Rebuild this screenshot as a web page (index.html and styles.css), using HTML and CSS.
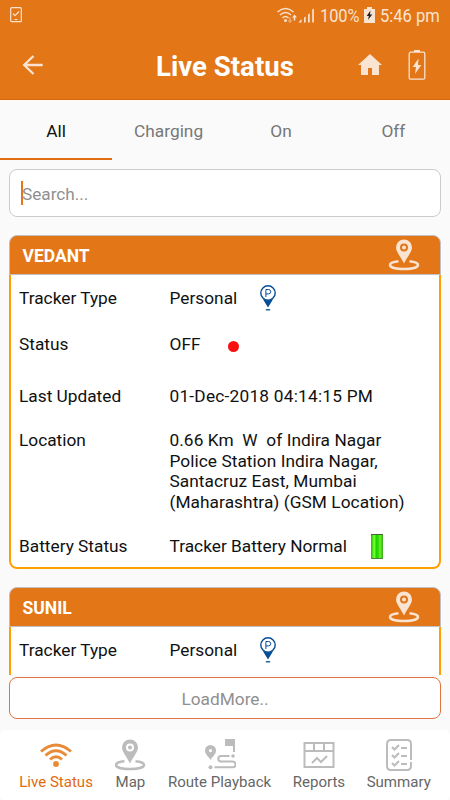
FILE: index.html
```html
<!DOCTYPE html>
<html lang="en">
<head>
<meta charset="utf-8">
<title>Live Status</title>
<link rel="stylesheet" href="styles.css">
</head>
<body>
<svg class="defs" width="0" height="0">
  <symbol id="pin" viewBox="0 0 32 32">
    <path fill-rule="evenodd" d="M16 .5A8 8 0 0 0 8 8.500C8 13 13 18 16 24.500C19 18 24 13 24 8.500A8 8 0 0 0 16 .5ZM16 4.500a4 4 0 1 1 0 8a4 4 0 0 1 0-8Z"/>
    <circle cx="16" cy="8.500" r="2"/>
    <path d="M10.500 22.300C5 22.800 2 24.300 2 26C2 28.500 8 30 16 30S30 28.500 30 26C30 24.300 27 22.800 21.500 22.300" fill="none" stroke="currentColor" stroke-width="2.500"/>
  </symbol>
  <symbol id="personal" viewBox="0 0 16 26">
    <circle cx="8" cy="8" r="7.200" fill="#fff" stroke="#064c99" stroke-width="1.400"/>
    <path d="M2.800 14Q8 16.500 13.200 14L8 22.500Z" fill="#064c99"/>
    <path d="M5.800 24.800h4.400" stroke="#064c99" stroke-width="1.300"/>
    <path d="M5.900 12V4.500h2.600a2.200 2.200 0 0 1 0 4.400H5.900" fill="none" stroke="#064c99" stroke-width="1"/>
  </symbol>
</svg>
<header class="header">
  <div class="system">
    <svg class="phone" viewBox="0 0 12 16"><rect x=".7" y=".7" width="10.600" height="14" rx="1"/><path d="M3 6.500l2 2.200L9 4.500M4.500 12.500h3"/></svg>
    <div class="system-right">
      <svg class="signals" viewBox="0 0 40 18">
        <g fill="none" stroke="#fae3d1" stroke-width="1.500"><path d="M1.500 5Q9.500-2 17.500 5M4 8Q9.500 3 15 8M6.500 11Q9.500 8 12.500 11"/></g>
        <circle cx="9.500" cy="13.500" r="1.500"/>
        <path d="M18.500 7.500l2.500 3h-1.700v3h-1.600v-3H16z"/><path opacity=".5" d="M13.200 10.500h1.600v3h1.700L14 16l-2.500-2.500h1.700z"/>
        <path d="M25.500 12v3.500h-3zM28 15.500v-5l1.700-1v6zM32 15.500v-8l1.700-1.200v9.200zM36.200 15.500V2.500l1.700-1v14z"/>
      </svg>
      <span class="percent">100%</span>
      <svg class="mini-battery" viewBox="0 0 11 16"><path d="M3 0h5v2h3v14H0V2h3z"/><path fill="#222" d="M6.500 3.500L2.700 9h2.200l-1 4L8.300 7.500H6z"/></svg>
      <span class="clock">5:46 pm</span>
    </div>
  </div>
  <div class="titlebar">
    <svg class="back" viewBox="0 0 22 20"><path d="M20.700 10H2M11.500 1L2.200 10l9.300 9"/></svg>
    <h1>Live Status</h1>
    <svg class="home" viewBox="0 0 24 22"><path d="M12 0L0 11h3v10h7v-7h4v7h7V11h3z"/></svg>
    <svg class="charge" viewBox="0 0 18 31"><rect x="1.200" y="2.200" width="15.600" height="27" rx="1.500"/><path d="M6 0h6v2H6zM10.500 8.500L4.700 17H8l-1 7 6.300-9H10z"/></svg>
  </div>
</header>
<nav class="tabs"><span class="selected">All</span><span>Charging</span><span>On</span><span>Off</span></nav>
<main class="list">
  <div class="search"><i class="caret"></i><span>Search...</span></div>
  <div class="cards">
    <section class="card">
      <div class="card-head"><h2>VEDANT</h2><svg class="locate"><use href="#pin"/></svg></div>
      <div class="card-body">
        <div class="row type"><span>Tracker Type</span><span>Personal</span><svg class="marker"><use href="#personal"/></svg></div>
        <div class="row status"><span>Status</span><span>OFF</span><i class="dot"></i></div>
        <div class="row updated"><span>Last Updated</span><span class="date">01-Dec-2018 04:14:15 PM</span></div>
        <div class="row location"><span>Location</span><span>0.66 Km&nbsp; W&nbsp; of Indira Nagar<br>Police Station Indira Nagar,<br>Santacruz East, Mumbai<br>(Maharashtra) (GSM Location)</span></div>
        <div class="row battery-row"><span>Battery Status</span><span>Tracker Battery Normal</span><i class="battery"></i></div>
      </div>
    </section>
    <section class="card">
      <div class="card-head"><h2>SUNIL</h2><svg class="locate"><use href="#pin"/></svg></div>
      <div class="card-body">
        <div class="row type"><span>Tracker Type</span><span>Personal</span><svg class="marker"><use href="#personal"/></svg></div>
      </div>
    </section>
  </div>
  <div class="more">LoadMore..</div>
</main>
<nav class="bottom">
  <div class="item live"><svg viewBox="0 0 32 32"><g fill="none" stroke="currentColor" stroke-width="2.800"><path d="M1 12.500Q16-.5 31 12.500M5.500 16.500Q16 7 26.500 16.500M10 20.500Q16 15 22 20.500"/></g><circle cx="16" cy="25" r="2.900"/></svg><span>Live Status</span></div>
  <div class="item map"><svg><use href="#pin"/></svg><span>Map</span></div>
  <div class="item route"><svg viewBox="0 0 32 32"><path fill-rule="evenodd" d="M6.500 6A5.500 5.500 0 0 0 1 11.500C1 15 4 17 6.500 21C9 17 12 15 12 11.500A5.500 5.500 0 0 0 6.500 6ZM6.500 10a1.600 1.600 0 1 1 0 3.200a1.600 1.600 0 0 1 0-3.200Z"/><circle cx="6.500" cy="28.300" r="2"/><circle cx="29" cy="17" r="1.800"/><path fill="none" stroke="currentColor" stroke-width="2" d="M10.500 28.300H28.500q3 0 3-2.900T28.500 22.500H17q-2.700 0-2.700-2.700T17 17h8.500"/><path d="M21 0h10v13h-2V7h-8z"/></svg><span>Route Playback</span></div>
  <div class="item reports"><svg viewBox="0 0 32 32"><g fill="none" stroke="currentColor" stroke-width="2"><rect x="1.500" y="4" width="29" height="24"/><path d="M1 12h30M11 4v8M21 4v8M9 24l5-5 4 4 6-6"/></g></svg><span>Reports</span></div>
  <div class="item summary"><svg viewBox="0 0 32 32"><g fill="none" stroke="currentColor" stroke-width="2"><path d="M28 21V5q0-4-4-4H8Q4 1 4 5v22q0 4 4 4h16q4 0 4-4v-4"/><path d="M9 8l2.500 2.500L16 6M9 16l2.500 2.500L16 14M9 24l2.500 2.500L16 22M18 9h6M18 17h6M18 25h6"/></g></svg><span>Summary</span></div>
</nav>
</body>
</html>
```
FILE: styles.css
```css
* { box-sizing: border-box; }
body { margin: 0; width: 450px; height: 800px; overflow: hidden; display: flex; flex-direction: column; background: #fafafa; color: #111; font: 17px/20px Roboto, sans-serif; }
h1, h2 { margin: 0; }
svg { flex: none; fill: currentColor; }
.defs { position: absolute; }
.header { height: 100px; flex: none; background: #e37617; border-bottom: 1px solid #d7660b; color: #fae3d1; }
.system { height: 31px; padding: 0 11px 0 10px; display: flex; justify-content: space-between; }
.phone { width: 12px; height: 16px; margin-top: 7px; fill: none; stroke: currentColor; stroke-width: 1.200; }
.system-right { display: flex; font: 19px/31px Roboto, sans-serif; }
.signals { width: 40px; height: 18px; margin: 7px 1px 0 -1px; }
.percent { width: 41px; margin-left: 3px; transform: scaleX(.86); transform-origin: left; white-space: nowrap; }
.mini-battery { width: 11px; height: 16px; margin: 7px 5px 0 3px; }
.clock { width: 59px; transform: scaleX(.87); transform-origin: left; white-space: nowrap; }
.titlebar { height: 68px; padding: 0 23px 0 22px; display: flex; align-items: center; }
.back { width: 22px; height: 20px; fill: none; stroke: currentColor; stroke-width: 2.300; }
h1 { width: 150px; margin-left: 112px; padding-top: 3px; font-size: 27.600px; line-height: 32px; font-weight: 700; color: #fff; white-space: nowrap; }
.home { width: 24px; height: 22px; margin-left: 52px; }
.charge { width: 18px; height: 31px; margin-left: 26px; }
.charge rect { fill: none; stroke: currentColor; stroke-width: 1.300; }
.tabs { height: 60px; flex: none; display: grid; grid-template: 60px / repeat(4, 112.400px); text-align: center; font-size: 17.300px; line-height: 63px; color: #777; }
.selected { border-bottom: 2px solid #e06d10; color: #111; }
.list { height: 570px; flex: none; padding: 9px 9px 0; }
.search { height: 48px; display: flex; align-items: center; padding-left: 11px; border: 1px solid #ccc; border-radius: 8px; background: #fff; color: #909090; }
.search span { margin-left: -1px; padding-top: 2px; font-size: 17.200px; }
.caret { width: 2px; height: 24px; background: #e37617; }
.cards { height: 440px; margin-top: 18px; overflow: hidden; }
.card { margin-bottom: 18px; }
.card-head { height: 40px; padding: 0 20px 0 12.500px; border: 1px solid #bfbfc5; border-radius: 8px 8px 0 0; background: #e37617; color: #fae3d1; display: flex; justify-content: space-between; align-items: center; }
h2 { color: #fff; font-size: 17.500px; line-height: 20px; font-weight: 700; padding-top: 1px; }
.locate { width: 32px; height: 32px; }
.card-body { border: 2px solid #ffa000; border-top: 0; border-radius: 0 0 8px 8px; background: #fff; height: 294px; padding: 13px 8px 0; font-size: 17.300px; }
.row { display: grid; grid-template-columns: 150.500px max-content max-content; white-space: nowrap; }
.type { height: 46px; }
.marker { width: 16px; height: 26px; margin: -3px 0 0 22.500px; }
.status { height: 52px; }
.dot { width: 11px; height: 11px; margin: 7px 0 0 27px; border-radius: 50%; background: #f91010; }
.date { letter-spacing: .22px; }
.updated { height: 44px; }
.location { height: 106px; line-height: 20.700px; }
.location span + span { letter-spacing: .05px; }
.battery { width: 12px; height: 25px; margin: -2px 0 0 24px; border-top: 1px solid #45623d; border-bottom: 1px solid #45853c; background: linear-gradient(90deg, #27b400, #6dff29 25%, #6dff29 35%, #1acb00 40%, #2bdc00 60%, #66f529 75%, #38a914); }
.more { height: 42px; margin-top: 2px; border: 1px solid #df7440; border-radius: 8px; background: #fff; text-align: center; font-size: 17.300px; line-height: 42px; color: #909090; }
.bottom { height: 70px; flex: none; display: flex; justify-content: center; gap: 21.500px; background: #fff; border-radius: 5px; padding-top: 9px; color: #666; font-size: 15.050px; line-height: 18px; }
.item { display: flex; flex-direction: column; align-items: center; gap: 2px; }
.item svg { width: 32px; height: 32px; color: #bcbcbc; }
.item span { white-space: nowrap; }
.live { color: #e06b0c; }
.live svg { color: #e88a36; }
```
